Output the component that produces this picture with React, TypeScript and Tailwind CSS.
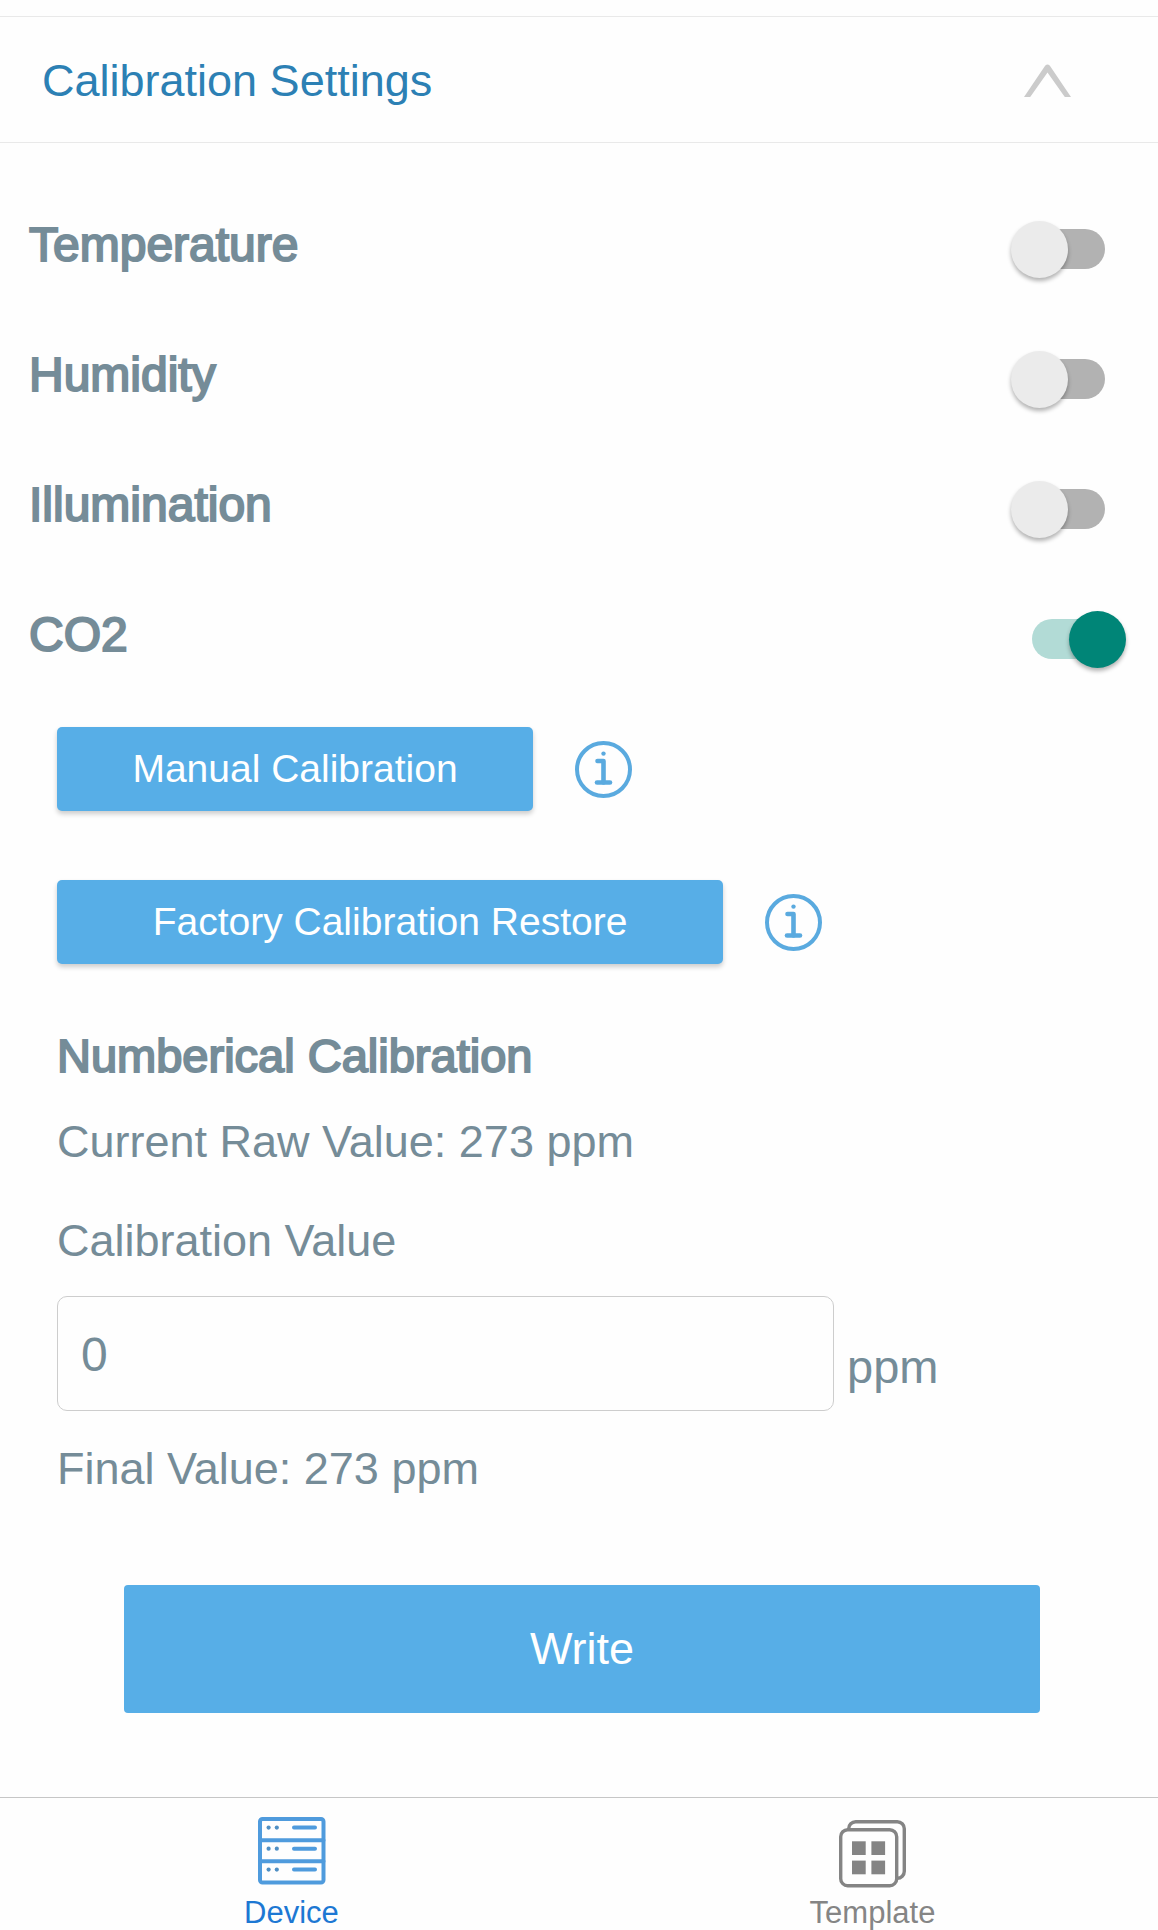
import { useState } from "react";

interface ToggleRowProps {
    id: string;
    label: string;
    checked: boolean;
    onChange: (id: string) => void;
}

const ToggleRow = ({ id, label, checked, onChange }: ToggleRowProps) => {
    return (
        <div className="flex h-[130px] items-center justify-between pl-[29px] pr-[53px]">
            <label htmlFor={id} className="text-[48px] leading-[60px] [-webkit-text-stroke:2px_#758c98]">{label}</label>
            <input
                id={id}
                type="checkbox"
                checked={checked}
                onChange={() => onChange(id)}
                className="relative mt-2 h-10 w-[73px] shrink-0 cursor-pointer appearance-none rounded-full bg-[#b2b2b2] before:absolute before:-left-[21px] before:-top-2 before:size-[57px] before:rounded-full before:bg-[#ebebeb] before:shadow-[0_3px_4px_rgba(0,0,0,0.3)] before:content-[''] checked:bg-[#b2dbd6] checked:before:left-[37px] checked:before:bg-[#008577]"
            />
        </div>
    );
};

const InfoButton = ({ label }: { label: string }) => {
    return (
        <button type="button" aria-label={label} className="shrink-0 cursor-pointer">
            <svg width="57" height="57" viewBox="0 0 57 57" fill="none" stroke="#5aaadf" strokeWidth="4" strokeLinecap="round">
                <circle cx="28.5" cy="28.5" r="26.5" />
                <circle cx="28.5" cy="12.6" r="2.2" fill="#5aaadf" stroke="none" />
                <path d="M22.5 20h6v21.5" strokeWidth="4.6" strokeLinejoin="round" />
                <path d="M22 41.5h13" strokeWidth="4.6" />
            </svg>
        </button>
    );
};

const DeviceIcon = () => {
    return (
        <svg width="68" height="71" viewBox="0 0 68 71" fill="none" stroke="#4f9bdd" strokeWidth="4" strokeLinecap="round">
            <rect x="2" y="2" width="63.5" height="63.5" rx="2.5" />
            <path d="M2 23.3h63.5M2 44.3h63.5" />
            <path d="M36 10.6h21M36 31.7h21M36 52.6h21" />
            <g fill="#4f8fc4" stroke="none">
                <circle cx="10.6" cy="10.6" r="2.1" />
                <circle cx="18.8" cy="10.6" r="2.1" />
                <circle cx="10.6" cy="31.7" r="2.1" />
                <circle cx="18.8" cy="31.7" r="2.1" />
                <circle cx="10.6" cy="52.6" r="2.1" />
                <circle cx="18.8" cy="52.6" r="2.1" />
            </g>
        </svg>
    );
};

const TemplateIcon = () => {
    return (
        <svg width="68" height="71" viewBox="0 0 68 71" fill="none" stroke="#848484" strokeWidth="3.4">
            <path d="M9.7 12v-.3a7 7 0 0 1 7-7h41.6a7 7 0 0 1 7 7v42.6a7 7 0 0 1-7 7" />
            <rect x="1.7" y="12.7" width="56" height="56" rx="7" />
            <g fill="#848484" stroke="none">
                <rect x="13" y="24.3" width="13.7" height="13.7" />
                <rect x="32.4" y="24.3" width="13.7" height="13.7" />
                <rect x="13" y="43.6" width="13.7" height="13.7" />
                <rect x="32.4" y="43.6" width="13.7" height="13.7" />
            </g>
        </svg>
    );
};

const App = () => {
    const rawValue = 273;
    const [open, setOpen] = useState(true);
    const [offset, setOffset] = useState('0');
    const [enabled, setEnabled] = useState<Record<string, boolean>>({
        temperature: false,
        humidity: false,
        illumination: false,
        co2: true
    });

    const toggle = (id: string) => {
        setEnabled(prev => ({ ...prev, [id]: !prev[id] }));
    };

    return (
        <div className="flex min-h-screen flex-col bg-[#fefefe] pt-4 font-['Liberation_Sans',Arial,sans-serif] text-[#758c98]">
            <main className="flex-1">
                <h1 className="border-y border-[#e9e9e9]">
                    <button
                        type="button"
                        aria-expanded={open}
                        onClick={() => setOpen(!open)}
                        className="flex h-[125px] w-full cursor-pointer items-center justify-between pl-[42px] pr-[87px] pt-0.5 text-[45px] leading-[60px] text-[#2c80b4]"
                    >
                        Calibration Settings
                        <svg width="47" height="33" viewBox="0 0 47 33" fill="#cbcbcb" className={open ? '' : 'rotate-180'}>
                            <path d="M0 33 21.3 1.4Q23.5-.6 25.7 1.4L47 33h-6.2L23.5 8.4 6.2 33Z" />
                        </svg>
                    </button>
                </h1>

                {open &&
                    <form className="pt-[37px]" onSubmit={e => e.preventDefault()}>
                        <ToggleRow id="temperature" label="Temperature" checked={enabled.temperature} onChange={toggle} />
                        <ToggleRow id="humidity" label="Humidity" checked={enabled.humidity} onChange={toggle} />
                        <ToggleRow id="illumination" label="Illumination" checked={enabled.illumination} onChange={toggle} />
                        <ToggleRow id="co2" label="CO2" checked={enabled.co2} onChange={toggle} />

                        {enabled.co2 &&
                            <div className="px-[57px] pt-[27px] text-[45px] leading-[60px]">
                                <div className="flex flex-col gap-[69px]">
                                    <div className="flex items-center gap-[42px]">
                                        <button type="button" className="h-[84px] w-[476px] cursor-pointer rounded-[5px] bg-[#57aee7] text-[39px] text-white shadow-[0_3px_5px_rgba(0,0,0,0.2)]">Manual Calibration</button>
                                        <InfoButton label="About manual calibration" />
                                    </div>
                                    <div className="flex items-center gap-[42px]">
                                        <button type="button" className="h-[84px] w-[666px] cursor-pointer rounded-[5px] bg-[#57aee7] text-[39px] text-white shadow-[0_3px_5px_rgba(0,0,0,0.2)]">Factory Calibration Restore</button>
                                        <InfoButton label="About factory calibration restore" />
                                    </div>
                                </div>
                                <h2 className="mt-[62px] text-[47px] [-webkit-text-stroke:2px_#758c98]">Numberical Calibration</h2>
                                <p className="mt-[26px]">Current Raw Value: {rawValue} ppm</p>
                                <label htmlFor="calibration-value" className="mt-[39px] block">Calibration Value</label>
                                <div className="mt-[25px] flex items-end gap-[13px]">
                                    <input
                                        id="calibration-value"
                                        type="text"
                                        inputMode="numeric"
                                        value={offset}
                                        onChange={e => setOffset(e.target.value)}
                                        className="h-[115px] w-[777px] min-w-0 rounded-[10px] border border-[#cdcdcd] bg-transparent px-[23px] pt-0.5 text-[48px]"
                                    />
                                    <span className="pb-3.5 text-[47px]">ppm</span>
                                </div>
                                <p className="mt-7">Final Value: {rawValue + Number(offset)} ppm</p>
                            </div>
                        }

                        <div className="pb-[84px] pl-[124px] pr-[118px] pt-[86px]">
                            <button type="submit" className="h-32 w-full cursor-pointer rounded-[4px] bg-[#57aee7] text-[45px] leading-[60px] text-white">Write</button>
                        </div>
                    </form>
                }
            </main>

            <nav className="grid grid-cols-2 gap-2.5 border-t border-[#c6c6c6] pl-1.5 pt-[19px] text-[31px] leading-[34px]">
                <a href="#device" aria-current="page" className="flex flex-col items-center gap-2 text-[#1d78d3]">
                    <DeviceIcon />
                    Device
                </a>
                <a href="#template" className="flex flex-col items-center gap-2 text-[#858585]">
                    <TemplateIcon />
                    Template
                </a>
            </nav>
        </div>
    );
};

export default App;
